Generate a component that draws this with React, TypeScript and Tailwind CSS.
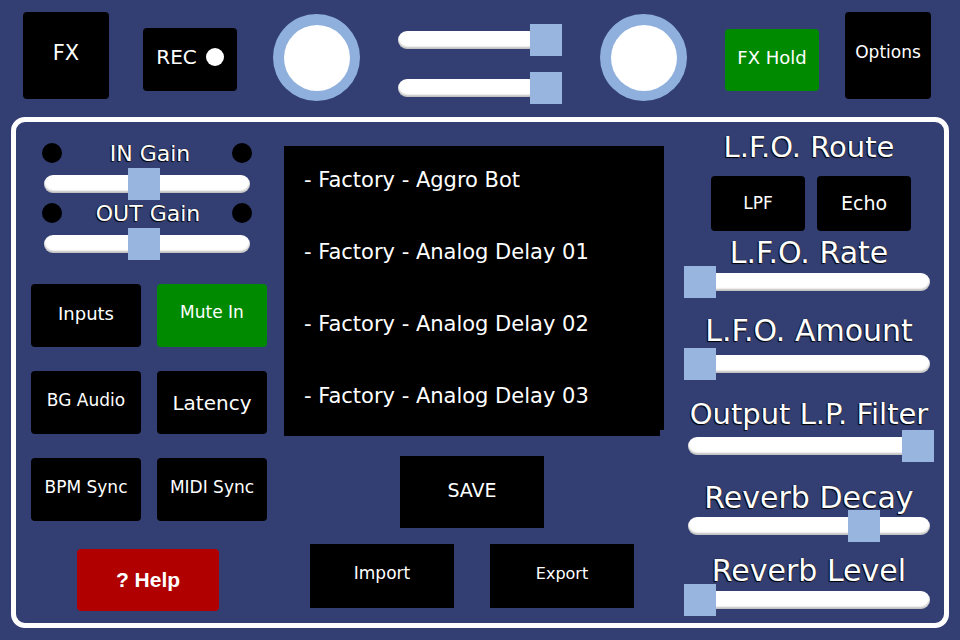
import React from "react";

const font = "font-['DejaVu_Sans',sans-serif]";
const shadow = "[text-shadow:-1px_1px_1px_#000,0_0_1px_#000]";

function Track({ width, thumbLeft, trackLeft = 0, trackWidth }: { width: number; thumbLeft: number; trackLeft?: number; trackWidth?: number }) {
  return (
    <div className="relative flex h-[32px] items-center" style={{ width }}>
      <div
        className="h-[18px] rounded-full bg-white shadow-[inset_0_-2px_2px_rgba(0,0,0,0.25)]"
        style={{ marginLeft: trackLeft, width: trackWidth ?? width - trackLeft }}
      />
      <div className="absolute top-0 h-[32px] w-[32px] bg-[#98b5df]" style={{ left: thumbLeft }} />
    </div>
  );
}

function Btn({ children, className = "" }: { children: React.ReactNode; className?: string }) {
  return (
    <div className={`flex items-center justify-center text-white ${className}`}>{children}</div>
  );
}

function Knob() {
  return (
    <div className="flex h-[87px] w-[87px] items-center justify-center rounded-full bg-[#8fb0dc]">
      <div className="h-[66px] w-[66px] rounded-full bg-white" />
    </div>
  );
}

function Label({ text, h, mt, size = "text-[30px]" }: { text: string; h: number; mt: number; size?: string }) {
  return (
    <div className={`flex items-center justify-center whitespace-nowrap text-white ${size} ${shadow}`} style={{ height: h, marginTop: mt }}>
      {text}
    </div>
  );
}

export default function App() {
  const presets = [
    "- Factory - Aggro Bot",
    "- Factory - Analog Delay 01",
    "- Factory - Analog Delay 02",
    "- Factory - Analog Delay 03",
  ];
  return (
    <div className={`h-[640px] w-[960px] overflow-hidden bg-[#333f72] ${font}`}>
      {/* Top bar */}
      <div className="flex h-[117px] items-start pl-[23px]">
        <Btn className="mt-[12px] h-[87px] w-[86px] rounded-[4px] bg-black pb-[3px] text-[21px]">FX</Btn>
        <Btn className="ml-[34px] mt-[28px] h-[63px] w-[94px] rounded-[4px] bg-black pb-[5px] text-[20px]">
          <span>REC</span>
          <span className="ml-[9px] h-[18px] w-[18px] rounded-full bg-white" />
        </Btn>
        <div className="ml-[36px] mt-[14px]">
          <Knob />
        </div>
        <div className="ml-[38px] mt-[24px] flex flex-col gap-[16px]">
          <Track width={164} thumbLeft={132} trackWidth={140} />
          <Track width={164} thumbLeft={132} trackWidth={140} />
        </div>
        <div className="ml-[38px] mt-[14px]">
          <Knob />
        </div>
        <Btn className="ml-[38px] mt-[29px] h-[62px] w-[94px] rounded-[4px] bg-[#008a00] pb-[5px] text-[18px]">FX Hold</Btn>
        <Btn className="ml-[26px] mt-[12px] h-[87px] w-[86px] rounded-[4px] bg-black pb-[6px] text-[17px]">Options</Btn>
      </div>

      {/* Main panel */}
      <div className="mx-[11px] flex h-[511px] rounded-[14px] border-[5px] border-white">
        {/* Left column */}
        <div className="flex w-[268px] flex-col">
          <div className="ml-[26px] mt-[18px] flex h-[26px] w-[210px] items-center">
            <div className="h-[20px] w-[20px] rounded-full bg-black" />
            <div className={`flex-1 pl-[6px] text-center text-[22px] text-white ${shadow}`}>IN Gain</div>
            <div className="h-[20px] w-[20px] rounded-full bg-black" />
          </div>
          <div className="ml-[28px] mt-[2px]">
            <Track width={206} thumbLeft={84} />
          </div>
          <div className="ml-[26px] flex h-[26px] w-[210px] items-center">
            <div className="h-[20px] w-[20px] rounded-full bg-black" />
            <div className={`flex-1 pl-[2px] text-center text-[22px] text-white ${shadow}`}>OUT Gain</div>
            <div className="h-[20px] w-[20px] rounded-full bg-black" />
          </div>
          <div className="ml-[28px] mt-[2px]">
            <Track width={206} thumbLeft={84} />
          </div>

          <div className="ml-[15px] mt-[24px] grid grid-cols-[110px_110px] gap-x-[16px] gap-y-[24px]">
            <Btn className="h-[63px] rounded-[4px] bg-black pb-[5px] text-[18px]">Inputs</Btn>
            <Btn className="h-[63px] rounded-[4px] bg-[#008a00] pb-[6px] text-[17px]">Mute In</Btn>
            <Btn className="h-[63px] rounded-[4px] bg-black pb-[4px] text-[17px]">BG Audio</Btn>
            <Btn className="h-[63px] rounded-[4px] bg-black text-[20px]">Latency</Btn>
            <Btn className="h-[63px] rounded-[4px] bg-black pb-[3px] text-[17px]">BPM Sync</Btn>
            <Btn className="h-[63px] rounded-[4px] bg-black pb-[3px] text-[17px]">MIDI Sync</Btn>
          </div>

          <Btn className="ml-[61px] mt-[28px] h-[62px] w-[142px] rounded-[4px] bg-[#b00000] font-['Liberation_Sans',sans-serif] text-[21px] font-bold">
            ? Help
          </Btn>
        </div>

        {/* Middle column */}
        <div className="flex w-[380px] flex-col">
          <div className="mt-[24px] flex h-[284px] w-[380px] flex-col gap-[44px] bg-black pl-[20px] pt-[20px]">
            {presets.map((p) => (
              <div key={p} className="whitespace-nowrap text-[21px] leading-[28px] text-white">
                {p}
              </div>
            ))}
          </div>
          <div className="h-[6px] w-[376px] bg-black" />
          <Btn className="ml-[116px] mt-[20px] h-[72px] w-[144px] bg-black pb-[4px] text-[19px]">SAVE</Btn>
          <div className="ml-[26px] mt-[16px] flex gap-[36px]">
            <Btn className="h-[64px] w-[144px] bg-black pb-[5px] text-[17px]">Import</Btn>
            <Btn className="h-[64px] w-[144px] bg-black pb-[5px] text-[16px]">Export</Btn>
          </div>
        </div>

        {/* Right column */}
        <div className="ml-[20px] flex w-[250px] flex-col">
          <Label text="L.F.O. Route" h={36} mt={8} size="text-[29px]" />
          <div className="mt-[10px] flex">
            <Btn className="ml-[27px] h-[55px] w-[94px] rounded-[4px] bg-black text-[17px]">LPF</Btn>
            <Btn className="ml-[12px] h-[55px] w-[94px] rounded-[4px] bg-black text-[19px]">Echo</Btn>
          </div>
          <Label text="L.F.O. Rate" h={28} mt={7} />
          <Track width={250} thumbLeft={0} trackLeft={4} trackWidth={242} />
          <Label text="L.F.O. Amount" h={36} mt={14} />
          <Track width={250} thumbLeft={0} trackLeft={4} trackWidth={242} />
          <Label text="Output L.P. Filter" h={30} mt={20} size="text-[29px]" />
          <Track width={250} thumbLeft={218} trackLeft={4} trackWidth={242} />
          <Label text="Reverb Decay" h={26} mt={22} />
          <Track width={250} thumbLeft={164} trackLeft={4} trackWidth={242} />
          <Label text="Reverb Level" h={28} mt={14} />
          <Track width={250} thumbLeft={0} trackLeft={4} trackWidth={242} />
        </div>
      </div>
    </div>
  );
}
